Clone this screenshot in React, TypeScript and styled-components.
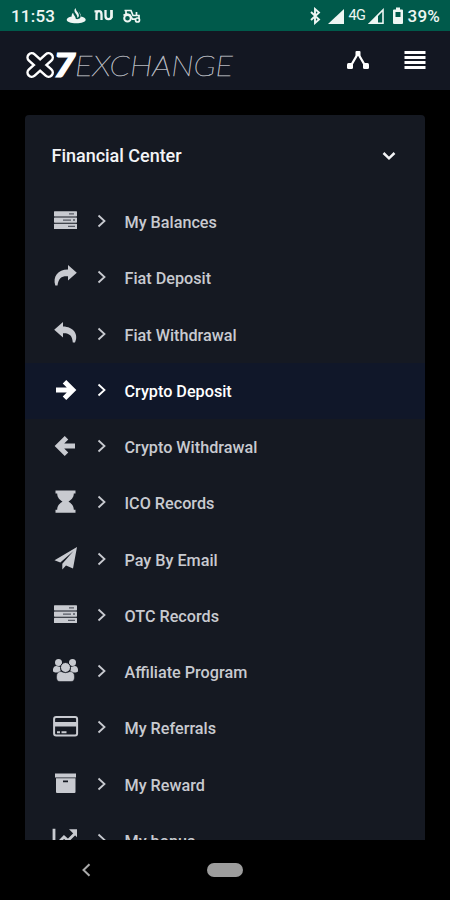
import React from 'react';
import styled, { createGlobalStyle } from 'styled-components';

const GlobalStyle = createGlobalStyle`
  * { box-sizing: border-box; }
  body { margin: 0; background: #000; font-family: Roboto, sans-serif; }
  svg { display: block; flex: none; }
`;

const Screen = styled.div`
  width: 450px;
  height: 900px;
  display: flex;
  flex-direction: column;
  background: #000;
  overflow: hidden;
`;

const StatusBar = styled.div`
  height: 30.500px;
  flex: none;
  display: flex;
  align-items: center;
  justify-content: space-between;
  padding: 2px 10px 0 11px;
  background: #005a4b;
  color: #eef6f3;
`;

const StatusGroup = styled.div`
  display: flex;
  align-items: center;
`;

const StatusText = styled.span`
  font-size: 17px;
  font-weight: 500;
  line-height: 20px;
  letter-spacing: 0.2px;
`;

const Header = styled.header`
  height: 59.500px;
  flex: none;
  display: flex;
  align-items: center;
  justify-content: space-between;
  padding: 0 24px 0 25px;
  background: #131722;
  color: #fff;
`;

const HeaderActions = styled.div`
  display: flex;
  align-items: center;
  gap: 35px;
`;

const Card = styled.main`
  height: 725px;
  flex: none;
  margin: 25px 25px 0;
  border-radius: 4px 4px 0 0;
  background: #151922;
  overflow: hidden;
`;

const CardHeader = styled.div`
  height: 79px;
  display: flex;
  align-items: center;
  justify-content: space-between;
  padding: 3px 29px 0 26.500px;
  color: #f3f4f6;
`;

const CardTitle = styled.h1`
  margin: 0;
  font-size: 18px;
  line-height: 24px;
  font-weight: 500;
  letter-spacing: -0.020px;
`;

const MenuList = styled.ul`
  list-style: none;
  margin: 0;
  padding: 0;
`;

const MenuItem = styled.li<{ $active?: boolean }>`
  height: 56.25px;
  display: flex;
  align-items: center;
  padding: 0 26px;
  background: ${p => (p.$active ? '#101729' : 'transparent')};
  color: ${p => (p.$active ? '#fff' : '#c8cad0')};
`;

const MenuChevron = styled.span`
  margin: -2px 17.500px 0 17px;
`;

const MenuLabel = styled.span`
  padding-top: 2px;
  font-size: 16.200px;
  line-height: 22px;
  font-weight: 500;
`;

const NavBar = styled.nav`
  height: 60px;
  flex: none;
  display: grid;
  grid-template-columns: 1fr 36px 1fr;
  align-items: center;
`;

const NavBack = styled.div`
  padding-left: 80px;
`;

const HomePill = styled.div`
  height: 14px;
  border-radius: 7px;
  background: #9d9d9d;
`;

const Logo = () => (
  <svg width="212" height="46" viewBox="25 37 212 46">
    <g fill="none" strokeLinecap="round">
      <path d="M31.800 57.500 L48.500 72.500 M48.500 57.500 L31.800 72.500" stroke="#fff" strokeWidth="11" />
      <path d="M31.800 57.500 L48.500 72.500 M48.500 57.500 L31.800 72.500" stroke="#11141d" strokeWidth="6" />
    </g>
    <text x="53.500" y="77.300" fill="#fff" stroke="#fff" strokeWidth="1.200" fontFamily="Lato, sans-serif" fontWeight="900" fontStyle="italic" fontSize="33" textLength="22" lengthAdjust="spacingAndGlyphs">7</text>
    <text x="75" y="76" fill="#b9bbc1" stroke="#b9bbc1" strokeWidth=".45" fontFamily="Lato, sans-serif" fontWeight="200" fontStyle="italic" fontSize="28.500" textLength="158" lengthAdjust="spacingAndGlyphs">EXCHANGE</text>
  </svg>
);

const NoticeIcons = () => (
  <svg width="76" height="20" viewBox="67 6 76 20" fill="currentColor">
    <path d="M76.500 8c-1.800 2-1 3.900.2 5.500 1 1.500 2 2.700 1.500 4.500l1.500-1.200c.7-2.300-.5-3.500-1.500-5-.8-1.200-1.500-2.200-1.700-3.800zM79.500 10c0 2 2.800 3.600 2.400 6.500 2.900.5 4.800 1.700 4.800 3.200 0 2-4 3.500-9.500 3.500s-9.500-1.500-9.500-3.500c0-1.500 2-2.700 5-3.200-.2-1.500.3-2.700 1.400-3.700.3 2.700 2.500 3.500 2.800 6.200 1.500.4 3.200 0 4.200-1 1.800-2.700-1.200-4.200-1.600-8z" />
    <g fill="none" stroke="currentColor">
      <g strokeWidth="2.300">
        <path d="M97.500 20v-5.500q0-3.300 2.500-3.300t2.500 3.300V20" />
        <path d="M106.500 10v6q0 3.200 3 3.200t3-3.200v-6" />
        <path d="M95.500 11.300h3M112.500 10v8" />
      </g>
      <circle cx="128.500" cy="18.300" r="3.300" strokeWidth="2" />
      <circle cx="138.500" cy="20" r="2" strokeWidth="1.700" />
      <path d="M125.500 10.500h6.500l2 5h6v3.500M137.500 15.500v-3.500M124.500 15.500q3-2.500 6.500-.5l2.500 4.200h3M127 10.500v4" strokeWidth="1.700" />
    </g>
  </svg>
);

const Bluetooth = () => (
  <svg width="14" height="18" viewBox="0 0 14 18" fill="none" stroke="currentColor" strokeWidth="1.900">
    <path d="M2 5l8 7.500-4 3.500V2l4 3.500-8 7.500" />
  </svg>
);

const Signal = ({ partial = false }: { partial?: boolean }) => (
  <svg width="17" height="17" viewBox="0 0 17 17" fill="currentColor">
    {partial ? (
      <><path d="M1 16L10 7v9z" /><path d="M1.700 15.300L15 2v13.300z" fill="none" stroke="currentColor" strokeWidth="1.600" /></>
    ) : <path d="M0 16L16 1v15z" />}
  </svg>
);

const Battery = () => (
  <svg width="12" height="18" viewBox="0 0 12 18">
    <path fill="currentColor" fillRule="evenodd" d="M4 .500h4v2h2q1 0 1 1V16q0 1-1 1H2q-1 0-1-1V3.500q0-1 1-1h2zM3.500 5v5h5V5z" />
  </svg>
);

const NetworkType = styled.span`
  width: 18px;
  margin: 0 1px 0 4px;
  font-size: 14.500px;
  letter-spacing: -0.8px;
  line-height: 20px;
`;

const StatusGap = styled.span<{ $w: number }>`
  width: ${p => p.$w}px;
`;

const ShareNodes = () => (
  <svg width="22" height="20" viewBox="0 0 22 20" fill="currentColor">
    <path d="M4 15.500L11 3.500l7 12" fill="none" stroke="currentColor" strokeWidth="2.300" />
    <rect x="8.500" y="1" width="5" height="5" rx="1" />
    <rect x="0" y="13" width="6" height="6" rx="1.500" />
    <rect x="16" y="13" width="6" height="6" rx="1.500" />
  </svg>
);

const MenuLines = () => (
  <svg width="22" height="20" viewBox="0 0 22 20" fill="currentColor">
    <path d="M.5 1h21v3H.5zM.5 6h21v3H.5zM.5 11h21v3H.5zM.5 16h21v3H.5z" />
  </svg>
);

type IconName = 'server' | 'forward' | 'reply' | 'right' | 'left' | 'hourglass' | 'plane' | 'users' | 'card' | 'archive' | 'chart';

const glyphs: Record<IconName, React.ReactNode> = {
  server: (
    <>
      <rect x="3" y="3.200" width="23" height="5.200" rx=".6" />
      <rect x="3" y="9.500" width="23" height="5.200" rx=".6" />
      <rect x="3" y="15.800" width="23" height="5.200" rx=".6" />
      <path d="M18 5.800h5M12 12.100h8M17 18.400h7" stroke="#555963" strokeWidth="1.200" />
      <path d="M22 12.100h2" stroke="#555963" strokeWidth="1.500" />
    </>
  ),
  forward: <path d="M17 1l8.800 7.800L17 16.500v-4.300c-6-.5-9.500 1.500-10.500 9.300H4.300C1.500 12.500 7 5.300 17 5.400z" />,
  reply: <path d="M12 1L3.200 8.800 12 16.500v-4.300c6-.3 9.300 2 9.800 9.300H24c4-8-1.500-16-12-16.100z" />,
  right: <path d="M5 13h17M13.500 4.800l8.300 8.200-8.300 8.200" fill="none" stroke="currentColor" strokeWidth="5" />,
  left: <path d="M24 13H7M15.500 4.800L7.200 13l8.300 8.200" fill="none" stroke="currentColor" strokeWidth="5" />,
  hourglass: <path d="M4.500 1.500H24.500v2.900h-1.700c0 4.500-3 6.500-5.300 8.200 2.300 1.700 5.300 3.700 5.300 8.200h1.700v2.900h-20v-2.900h1.700c0-4.500 3-6.500 5.300-8.200-2.300-1.700-5.300-3.700-5.300-8.200H4.500z" />,
  plane: <path d="M26 1L3.500 14.300l5.800 2.300L22.500 5 11.300 17.800v5.700l3.700-4 7 3z" />,
  users: (
    <>
      <circle cx="7.500" cy="4.500" r="3.500" /><circle cx="21.500" cy="4.500" r="3.500" />
      <path d="M2 13.500q-.5-5.500 3.500-5.500l4 1v5.500H4zM27 13.500q.5-5.500-3.500-5.500l-4 1v5.500H25z" />
      <circle cx="14.500" cy="9.500" r="5" stroke="#151922" />
      <path d="M5.500 19q0-5.500 4.500-5.500 4.500 2.500 9 0 4.500 0 4.500 5.500 0 4.500-3.500 4.500H9q-3.500 0-3.500-4.500z" stroke="#151922" strokeWidth=".5" />
    </>
  ),
  card: (
    <>
      <rect x="3.100" y="3" width="23" height="18.500" rx="2" fill="none" stroke="currentColor" strokeWidth="2" />
      <path d="M3 8h23v4.500H3zM6 17.200h3v2H6zM10.500 17.200h5v2h-5z" />
    </>
  ),
  archive: <path fillRule="evenodd" d="M4 2.500h21v4H4zM5 7.200h19.500V21q0 1-1 1H6q-1 0-1-1zM12 9.500v1.700h5V9.500z" />,
  chart: (
    <>
      <path d="M3 1.800V22h25M8 15l5-5 4 3.500 7-7" fill="none" stroke="currentColor" strokeWidth="2.800" />
      <path d="M18 2.300H26v8z" />
    </>
  ),
};

const ItemIcon = ({ name }: { name: IconName }) => (
  <svg width="29" height="28" viewBox="0 0 29 28" fill="currentColor">{glyphs[name]}</svg>
);

const items: { icon: IconName; label: string; active?: boolean }[] = [
  { icon: 'server', label: 'My Balances' },
  { icon: 'forward', label: 'Fiat Deposit' },
  { icon: 'reply', label: 'Fiat Withdrawal' },
  { icon: 'right', label: 'Crypto Deposit', active: true },
  { icon: 'left', label: 'Crypto Withdrawal' },
  { icon: 'hourglass', label: 'ICO Records' },
  { icon: 'plane', label: 'Pay By Email' },
  { icon: 'server', label: 'OTC Records' },
  { icon: 'users', label: 'Affiliate Program' },
  { icon: 'card', label: 'My Referrals' },
  { icon: 'archive', label: 'My Reward' },
  { icon: 'chart', label: 'My bonus' },
];

export default function App() {
  return (
    <>
      <GlobalStyle />
      <Screen>
        <StatusBar>
          <StatusGroup>
            <StatusText>11:53</StatusText>
            <StatusGap $w={11} />
            <NoticeIcons />
          </StatusGroup>
          <StatusGroup>
            <Bluetooth />
            <StatusGap $w={5} />
            <Signal />
            <NetworkType>4G</NetworkType>
            <Signal partial />
            <StatusGap $w={7} />
            <Battery />
            <StatusGap $w={4} />
            <StatusText>39%</StatusText>
          </StatusGroup>
        </StatusBar>
        <Header>
          <Logo />
          <HeaderActions>
            <ShareNodes />
            <MenuLines />
          </HeaderActions>
        </Header>
        <Card>
          <CardHeader>
            <CardTitle>Financial Center</CardTitle>
            <svg width="14" height="10" viewBox="0 0 14 10" fill="none" stroke="currentColor" strokeWidth="2.500">
              <path d="M1.500 2L7 7.300 12.500 2" />
            </svg>
          </CardHeader>
          <MenuList>
            {items.map(item => (
              <MenuItem key={item.label} $active={item.active}>
                <ItemIcon name={item.icon} />
                <MenuChevron>
                  <svg width="10" height="14" viewBox="0 0 10 14" fill="none" stroke="currentColor" strokeWidth="1.800">
                    <path d="M1.500 1.500L7.500 7l-6 5.500" />
                  </svg>
                </MenuChevron>
                <MenuLabel>{item.label}</MenuLabel>
              </MenuItem>
            ))}
          </MenuList>
        </Card>
        <NavBar>
          <NavBack>
            <svg width="12" height="14" viewBox="0 0 12 14" fill="none" stroke="#aaa" strokeWidth="2">
              <path d="M9.500 1.200L3.500 7l6 5.800" />
            </svg>
          </NavBack>
          <HomePill />
        </NavBar>
      </Screen>
    </>
  );
}
